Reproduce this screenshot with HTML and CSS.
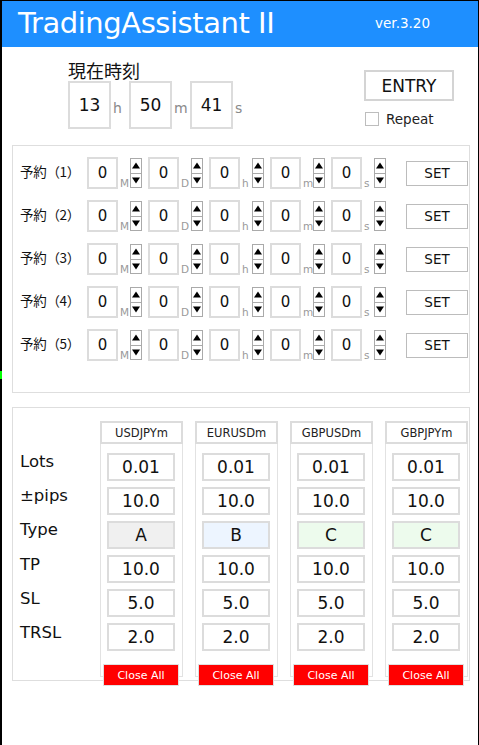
FILE: index.html
```html
<!DOCTYPE html>
<html lang="ja">
<head>
<meta charset="utf-8">
<title>TradingAssistant II</title>
<link rel="stylesheet" href="styles.css">
</head>
<body>
<div class="marker"></div>
<div class="app">
  <header class="topbar">
    <h1 class="title">TradingAssistant II</h1>
    <span class="version">ver.3.20</span>
  </header>

  <section class="clock-area">
    <div class="clock">
      <div class="clock-title">現在時刻</div>
      <div class="clock-row">
        <div class="tbox">13</div><span class="tunit">h</span>
        <div class="tbox">50</div><span class="tunit">m</span>
        <div class="tbox">41</div><span class="tunit">s</span>
      </div>
    </div>
    <div class="entry">
      <button class="entry-btn">ENTRY</button>
      <label class="repeat"><span class="check"></span>Repeat</label>
    </div>
  </section>

  <section class="panel reserve">
    <div class="rrow">
      <span class="rlabel">予約（1）</span>
      <div class="grp"><div class="nbox">0</div><span class="nunit">M</span><div class="spin"><div class="up"><svg viewBox="0 0 9 7"><polygon points="4.5,0 9,7 0,7"/></svg></div><div class="dn"><svg viewBox="0 0 9 7"><polygon points="0,0 9,0 4.5,7"/></svg></div></div></div>
      <div class="grp"><div class="nbox">0</div><span class="nunit">D</span><div class="spin"><div class="up"><svg viewBox="0 0 9 7"><polygon points="4.5,0 9,7 0,7"/></svg></div><div class="dn"><svg viewBox="0 0 9 7"><polygon points="0,0 9,0 4.5,7"/></svg></div></div></div>
      <div class="grp"><div class="nbox">0</div><span class="nunit">h</span><div class="spin"><div class="up"><svg viewBox="0 0 9 7"><polygon points="4.5,0 9,7 0,7"/></svg></div><div class="dn"><svg viewBox="0 0 9 7"><polygon points="0,0 9,0 4.5,7"/></svg></div></div></div>
      <div class="grp"><div class="nbox">0</div><span class="nunit">m</span><div class="spin"><div class="up"><svg viewBox="0 0 9 7"><polygon points="4.5,0 9,7 0,7"/></svg></div><div class="dn"><svg viewBox="0 0 9 7"><polygon points="0,0 9,0 4.5,7"/></svg></div></div></div>
      <div class="grp"><div class="nbox">0</div><span class="nunit">s</span><div class="spin"><div class="up"><svg viewBox="0 0 9 7"><polygon points="4.5,0 9,7 0,7"/></svg></div><div class="dn"><svg viewBox="0 0 9 7"><polygon points="0,0 9,0 4.5,7"/></svg></div></div></div>
      <button class="set-btn">SET</button>
    </div>
    <div class="rrow">
      <span class="rlabel">予約（2）</span>
      <div class="grp"><div class="nbox">0</div><span class="nunit">M</span><div class="spin"><div class="up"><svg viewBox="0 0 9 7"><polygon points="4.5,0 9,7 0,7"/></svg></div><div class="dn"><svg viewBox="0 0 9 7"><polygon points="0,0 9,0 4.5,7"/></svg></div></div></div>
      <div class="grp"><div class="nbox">0</div><span class="nunit">D</span><div class="spin"><div class="up"><svg viewBox="0 0 9 7"><polygon points="4.5,0 9,7 0,7"/></svg></div><div class="dn"><svg viewBox="0 0 9 7"><polygon points="0,0 9,0 4.5,7"/></svg></div></div></div>
      <div class="grp"><div class="nbox">0</div><span class="nunit">h</span><div class="spin"><div class="up"><svg viewBox="0 0 9 7"><polygon points="4.5,0 9,7 0,7"/></svg></div><div class="dn"><svg viewBox="0 0 9 7"><polygon points="0,0 9,0 4.5,7"/></svg></div></div></div>
      <div class="grp"><div class="nbox">0</div><span class="nunit">m</span><div class="spin"><div class="up"><svg viewBox="0 0 9 7"><polygon points="4.5,0 9,7 0,7"/></svg></div><div class="dn"><svg viewBox="0 0 9 7"><polygon points="0,0 9,0 4.5,7"/></svg></div></div></div>
      <div class="grp"><div class="nbox">0</div><span class="nunit">s</span><div class="spin"><div class="up"><svg viewBox="0 0 9 7"><polygon points="4.5,0 9,7 0,7"/></svg></div><div class="dn"><svg viewBox="0 0 9 7"><polygon points="0,0 9,0 4.5,7"/></svg></div></div></div>
      <button class="set-btn">SET</button>
    </div>
    <div class="rrow">
      <span class="rlabel">予約（3）</span>
      <div class="grp"><div class="nbox">0</div><span class="nunit">M</span><div class="spin"><div class="up"><svg viewBox="0 0 9 7"><polygon points="4.5,0 9,7 0,7"/></svg></div><div class="dn"><svg viewBox="0 0 9 7"><polygon points="0,0 9,0 4.5,7"/></svg></div></div></div>
      <div class="grp"><div class="nbox">0</div><span class="nunit">D</span><div class="spin"><div class="up"><svg viewBox="0 0 9 7"><polygon points="4.5,0 9,7 0,7"/></svg></div><div class="dn"><svg viewBox="0 0 9 7"><polygon points="0,0 9,0 4.5,7"/></svg></div></div></div>
      <div class="grp"><div class="nbox">0</div><span class="nunit">h</span><div class="spin"><div class="up"><svg viewBox="0 0 9 7"><polygon points="4.5,0 9,7 0,7"/></svg></div><div class="dn"><svg viewBox="0 0 9 7"><polygon points="0,0 9,0 4.5,7"/></svg></div></div></div>
      <div class="grp"><div class="nbox">0</div><span class="nunit">m</span><div class="spin"><div class="up"><svg viewBox="0 0 9 7"><polygon points="4.5,0 9,7 0,7"/></svg></div><div class="dn"><svg viewBox="0 0 9 7"><polygon points="0,0 9,0 4.5,7"/></svg></div></div></div>
      <div class="grp"><div class="nbox">0</div><span class="nunit">s</span><div class="spin"><div class="up"><svg viewBox="0 0 9 7"><polygon points="4.5,0 9,7 0,7"/></svg></div><div class="dn"><svg viewBox="0 0 9 7"><polygon points="0,0 9,0 4.5,7"/></svg></div></div></div>
      <button class="set-btn">SET</button>
    </div>
    <div class="rrow">
      <span class="rlabel">予約（4）</span>
      <div class="grp"><div class="nbox">0</div><span class="nunit">M</span><div class="spin"><div class="up"><svg viewBox="0 0 9 7"><polygon points="4.5,0 9,7 0,7"/></svg></div><div class="dn"><svg viewBox="0 0 9 7"><polygon points="0,0 9,0 4.5,7"/></svg></div></div></div>
      <div class="grp"><div class="nbox">0</div><span class="nunit">D</span><div class="spin"><div class="up"><svg viewBox="0 0 9 7"><polygon points="4.5,0 9,7 0,7"/></svg></div><div class="dn"><svg viewBox="0 0 9 7"><polygon points="0,0 9,0 4.5,7"/></svg></div></div></div>
      <div class="grp"><div class="nbox">0</div><span class="nunit">h</span><div class="spin"><div class="up"><svg viewBox="0 0 9 7"><polygon points="4.5,0 9,7 0,7"/></svg></div><div class="dn"><svg viewBox="0 0 9 7"><polygon points="0,0 9,0 4.5,7"/></svg></div></div></div>
      <div class="grp"><div class="nbox">0</div><span class="nunit">m</span><div class="spin"><div class="up"><svg viewBox="0 0 9 7"><polygon points="4.5,0 9,7 0,7"/></svg></div><div class="dn"><svg viewBox="0 0 9 7"><polygon points="0,0 9,0 4.5,7"/></svg></div></div></div>
      <div class="grp"><div class="nbox">0</div><span class="nunit">s</span><div class="spin"><div class="up"><svg viewBox="0 0 9 7"><polygon points="4.5,0 9,7 0,7"/></svg></div><div class="dn"><svg viewBox="0 0 9 7"><polygon points="0,0 9,0 4.5,7"/></svg></div></div></div>
      <button class="set-btn">SET</button>
    </div>
    <div class="rrow">
      <span class="rlabel">予約（5）</span>
      <div class="grp"><div class="nbox">0</div><span class="nunit">M</span><div class="spin"><div class="up"><svg viewBox="0 0 9 7"><polygon points="4.5,0 9,7 0,7"/></svg></div><div class="dn"><svg viewBox="0 0 9 7"><polygon points="0,0 9,0 4.5,7"/></svg></div></div></div>
      <div class="grp"><div class="nbox">0</div><span class="nunit">D</span><div class="spin"><div class="up"><svg viewBox="0 0 9 7"><polygon points="4.5,0 9,7 0,7"/></svg></div><div class="dn"><svg viewBox="0 0 9 7"><polygon points="0,0 9,0 4.5,7"/></svg></div></div></div>
      <div class="grp"><div class="nbox">0</div><span class="nunit">h</span><div class="spin"><div class="up"><svg viewBox="0 0 9 7"><polygon points="4.5,0 9,7 0,7"/></svg></div><div class="dn"><svg viewBox="0 0 9 7"><polygon points="0,0 9,0 4.5,7"/></svg></div></div></div>
      <div class="grp"><div class="nbox">0</div><span class="nunit">m</span><div class="spin"><div class="up"><svg viewBox="0 0 9 7"><polygon points="4.5,0 9,7 0,7"/></svg></div><div class="dn"><svg viewBox="0 0 9 7"><polygon points="0,0 9,0 4.5,7"/></svg></div></div></div>
      <div class="grp"><div class="nbox">0</div><span class="nunit">s</span><div class="spin"><div class="up"><svg viewBox="0 0 9 7"><polygon points="4.5,0 9,7 0,7"/></svg></div><div class="dn"><svg viewBox="0 0 9 7"><polygon points="0,0 9,0 4.5,7"/></svg></div></div></div>
      <button class="set-btn">SET</button>
    </div>
  </section>

  <section class="panel pairs">
    <div class="plabels">
      <div class="plabel">Lots</div>
      <div class="plabel">±pips</div>
      <div class="plabel">Type</div>
      <div class="plabel">TP</div>
      <div class="plabel">SL</div>
      <div class="plabel">TRSL</div>
    </div>
    <div class="pcol">
      <div class="phead">USDJPYm</div>
      <div class="pval">0.01</div>
      <div class="pval">10.0</div>
      <div class="pval type-a">A</div>
      <div class="pval">10.0</div>
      <div class="pval">5.0</div>
      <div class="pval">2.0</div>
      <button class="close-btn">Close All</button>
    </div>
    <div class="pcol">
      <div class="phead">EURUSDm</div>
      <div class="pval">0.01</div>
      <div class="pval">10.0</div>
      <div class="pval type-b">B</div>
      <div class="pval">10.0</div>
      <div class="pval">5.0</div>
      <div class="pval">2.0</div>
      <button class="close-btn">Close All</button>
    </div>
    <div class="pcol">
      <div class="phead">GBPUSDm</div>
      <div class="pval">0.01</div>
      <div class="pval">10.0</div>
      <div class="pval type-c">C</div>
      <div class="pval">10.0</div>
      <div class="pval">5.0</div>
      <div class="pval">2.0</div>
      <button class="close-btn">Close All</button>
    </div>
    <div class="pcol">
      <div class="phead">GBPJPYm</div>
      <div class="pval">0.01</div>
      <div class="pval">10.0</div>
      <div class="pval type-c">C</div>
      <div class="pval">10.0</div>
      <div class="pval">5.0</div>
      <div class="pval">2.0</div>
      <button class="close-btn">Close All</button>
    </div>
  </section>
</div>
</body>
</html>
```

FILE: styles.css
```css
* { box-sizing: border-box; }

html, body {
  margin: 0;
  padding: 0;
  background: #000;
  height: 745px;
  overflow: hidden;
}

body {
  font-family: "DejaVu Sans", "Noto Sans CJK JP", sans-serif;
  color: #111;
  position: relative;
}

.marker {
  position: absolute;
  left: 0;
  top: 371px;
  width: 2px;
  height: 8px;
  background: #00ff00;
}

.app {
  margin: 1px 1px 0 2px;
  width: 476px;
  height: 744px;
  background: #fff;
}

.topbar {
  height: 46px;
  background: #1e8fff;
  display: flex;
  align-items: center;
  justify-content: space-between;
  padding: 0 48px 0 16px;
}

.title {
  margin: 0;
  font-weight: normal;
  font-size: 29px;
  letter-spacing: -0.45px;
  color: #fff;
  line-height: 1;
  padding-bottom: 2px;
}

.version {
  color: #fff;
  font-size: 13.5px;
  padding-bottom: 2px;
}

/* clock */
.clock-area {
  height: 98px;
  display: flex;
  align-items: flex-start;
}

.clock {
  margin-left: 66px;
  padding-top: 12px;
}

.clock-title {
  font-family: "Noto Sans CJK JP", sans-serif;
  font-size: 18px;
  line-height: 22px;
  height: 22px;
}

.clock-row {
  display: flex;
  align-items: center;
}

.tbox {
  width: 43px;
  height: 48px;
  border: 2px solid #dcdcdc;
  display: flex;
  align-items: center;
  justify-content: center;
  font-size: 17px;
}

.tunit {
  color: #8a8a8a;
  font-size: 14px;
  width: 18px;
  padding-left: 2px;
  padding-top: 6px;
}

.entry {
  margin-left: auto;
  margin-right: 24px;
  padding-top: 23px;
  width: 90px;
}

.entry-btn {
  display: block;
  width: 90px;
  height: 31px;
  background: #fff;
  border: 2px solid #d4d4d4;
  font-family: "DejaVu Sans", sans-serif;
  font-size: 17px;
  color: #111;
  padding: 0;
}

.repeat {
  display: flex;
  align-items: center;
  margin-top: 10px;
  margin-left: 1px;
  font-size: 13.5px;
  color: #222;
}

.check {
  width: 14px;
  height: 14px;
  border: 1px solid #bdbdbd;
  margin-right: 7px;
  background: #fff;
}

/* panels */
.panel {
  border: 1px solid #dedede;
  margin-left: 10px;
  width: 458px;
}

.reserve {
  height: 248px;
  padding: 11px 0 0 7px;
  display: flex;
  flex-direction: column;
  gap: 11px;
}

.rrow {
  display: flex;
  align-items: center;
  height: 32px;
  flex-shrink: 0;
}

.rlabel {
  font-family: "Noto Sans CJK JP", sans-serif;
  font-size: 13.5px;
  width: 67px;
  margin-top: -4px;
  white-space: nowrap;
  letter-spacing: -0.3px;
}

.grp {
  display: flex;
  align-items: center;
  margin-right: 6px;
}

.nbox {
  width: 31px;
  height: 32px;
  border: 2px solid #dcdcdc;
  display: flex;
  align-items: center;
  justify-content: center;
  font-size: 15px;
}

.nunit {
  width: 12px;
  align-self: flex-end;
  font-size: 10.5px;
  color: #999;
  padding-left: 2px;
  line-height: 11px;
}

.spin {
  width: 12px;
  height: 30px;
  display: flex;
  flex-direction: column;
}

.spin .up, .spin .dn {
  flex: 1;
  border: 1px solid #aaa;
  display: flex;
  align-items: center;
  justify-content: center;
  background: #fff;
}

.spin .dn { border-top: none; }

.spin svg {
  width: 8px;
  height: 7px;
  fill: #000;
  display: block;
}

.set-btn {
  margin-left: 14px;
  width: 62px;
  height: 25px;
  background: #fff;
  border: 1px solid #bcbcbc;
  font-family: "DejaVu Sans", sans-serif;
  font-size: 13.5px;
  color: #111;
  padding: 0;
}

/* pairs */
.pairs {
  margin-top: 14px;
  height: 274px;
  padding: 13px 0 0 7px;
  display: flex;
  align-items: flex-start;
  gap: 12px;
}

.plabels {
  width: 68px;
  padding-top: 24px;
}

.plabel {
  height: 34.2px;
  line-height: 34px;
  font-size: 16.5px;
}

.pcol {
  width: 83px;
  height: 256px;
  border: 1px solid #e2e2e2;
  display: flex;
  flex-direction: column;
  align-items: flex-start;
  flex-shrink: 0;
}

.pcol > * { flex-shrink: 0; }

.phead {
  width: 83px;
  margin: -1px -1px 0 -1px;
  height: 23px;
  border: 2px solid #dcdcdc;
  font-size: 11.5px;
  display: flex;
  align-items: center;
  justify-content: center;
  color: #222;
}

.pval {
  margin-left: 6px;
  width: 68px;
  height: 28px;
  border: 2px solid #dcdcdc;
  display: flex;
  align-items: center;
  justify-content: center;
  font-size: 17px;
  margin-top: 6px;
  background: #fff;
}

.phead + .pval { margin-top: 9px; }

.type-a { background: #f0f0f0; }
.type-b { background: #edf5ff; }
.type-c { background: #edfbed; }

.close-btn {
  margin-top: 13px;
  margin-left: 2px;
  width: 76px;
  height: 22px;
  background: #ff0000;
  border: 1px solid #e0e0e0;
  color: #fff;
  font-family: "DejaVu Sans", sans-serif;
  font-size: 11px;
  padding: 0;
}
```
